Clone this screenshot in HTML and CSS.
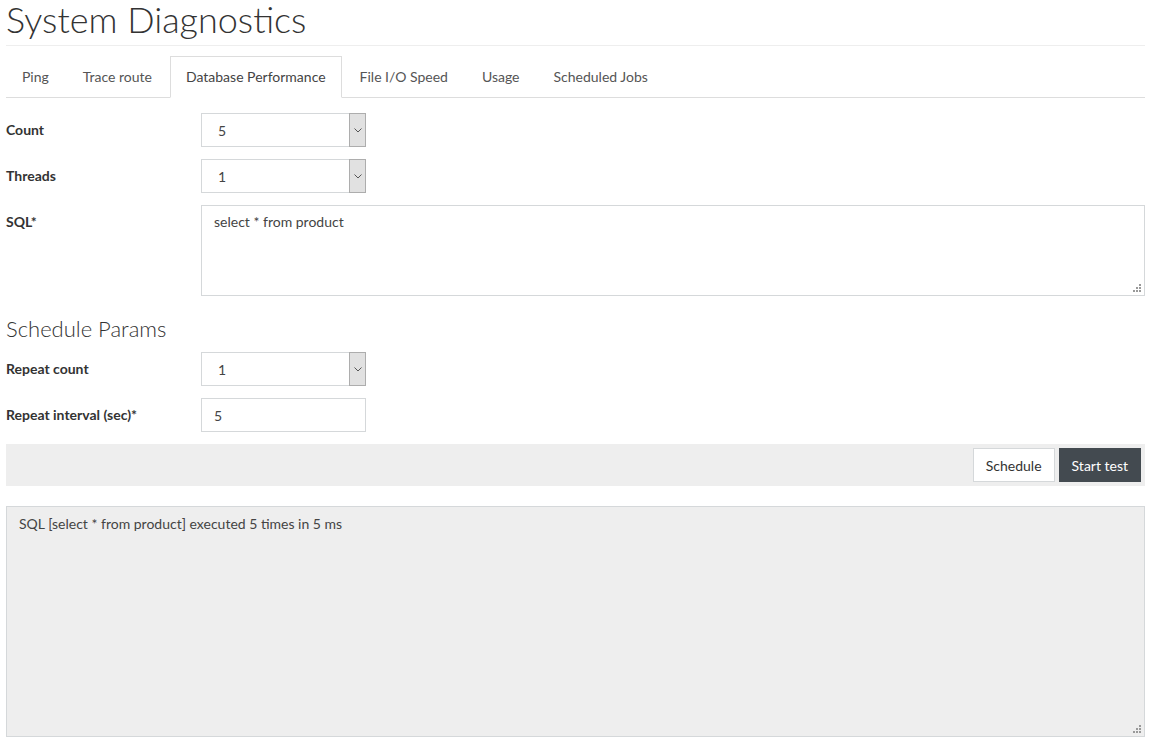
FILE: index.html
```html
<!DOCTYPE html>
<html lang="en">
<head>
  <meta charset="UTF-8">
  <meta name="viewport" content="width=device-width, initial-scale=1.0">
  <title>System Diagnostics</title>
  <link rel="stylesheet" href="styles.css">
</head>
<body>
  <h1 class="page-title">System Diagnostics</h1>

  <!-- Tabs -->
  <ul class="tabs">
    <li><a href="#">Ping</a></li>
    <li><a href="#">Trace route</a></li>
    <li class="active"><a href="#">Database Performance</a></li>
    <li><a href="#">File I/O Speed</a></li>
    <li><a href="#">Usage</a></li>
    <li><a href="#">Scheduled Jobs</a></li>
  </ul>

  <!-- Test params -->
  <form class="form">
    <div class="row">
      <label class="label">Count</label>
      <div class="select-wrap">
        <select class="control">
          <option>5</option>
        </select>
        <span class="select-arrow"><svg width="8" height="5" viewBox="0 0 8 5"><path d="M0.5 0.5 L4 4 L7.5 0.5" fill="none" stroke="#555" stroke-width="1"/></svg></span>
      </div>
    </div>
    <div class="row">
      <label class="label">Threads</label>
      <div class="select-wrap">
        <select class="control">
          <option>1</option>
        </select>
        <span class="select-arrow"><svg width="8" height="5" viewBox="0 0 8 5"><path d="M0.5 0.5 L4 4 L7.5 0.5" fill="none" stroke="#555" stroke-width="1"/></svg></span>
      </div>
    </div>
    <div class="row">
      <label class="label">SQL*</label>
      <div class="area-wrap">
        <textarea class="control sql">select * from product</textarea>
        <span class="grip"></span>
      </div>
    </div>

    <h3 class="subtitle">Schedule Params</h3>

    <div class="row">
      <label class="label">Repeat count</label>
      <div class="select-wrap">
        <select class="control">
          <option>1</option>
        </select>
        <span class="select-arrow"><svg width="8" height="5" viewBox="0 0 8 5"><path d="M0.5 0.5 L4 4 L7.5 0.5" fill="none" stroke="#555" stroke-width="1"/></svg></span>
      </div>
    </div>
    <div class="row">
      <label class="label">Repeat interval (sec)*</label>
      <input class="control short" type="text" value="5">
    </div>

    <div class="toolbar">
      <button type="button" class="btn">Schedule</button>
      <button type="button" class="btn btn-dark">Start test</button>
    </div>
  </form>

  <!-- Output -->
  <div class="area-wrap">
    <textarea class="result" readonly>SQL [select * from product] executed 5 times in 5 ms</textarea>
    <span class="grip"></span>
  </div>
</body>
</html>
```

FILE: styles.css
```css
body {
  font-family: Lato, "Open Sans", sans-serif;
  font-size: 14px;
  color: #333;
  margin: 0 6px;
}
.page-title {
  font-size: 36px;
  font-weight: 300;
  line-height: 1.2;
  margin: -2px 0 10px;
  padding-bottom: 4px;
  border-bottom: 1px solid #eee;
}
.tabs {
  list-style: none;
  margin: 0 0 15px;
  padding: 0;
  display: flex;
  border-bottom: 1px solid #ddd;
}
.tabs li {
  margin-bottom: -1px;
  margin-right: 2px;
}
.tabs a {
  display: block;
  padding: 10px 15px;
  font-size: 14px;
  line-height: 20px;
  color: #555;
  text-decoration: none;
  border: 1px solid transparent;
}
.tabs .active a {
  color: #444;
  background: #fff;
  border-color: #ddd #ddd transparent;
}
.row {
  display: flex;
  align-items: flex-start;
  margin-bottom: 12px;
}
.label {
  width: 195px;
  flex: none;
  font-weight: bold;
  line-height: 34px;
}
.control {
  font-family: inherit;
  font-size: 14px;
  color: #444;
  height: 34px;
  box-sizing: border-box;
  border: 1px solid #d5d8da;
  background: #fff;
  padding: 0 12px;
  border-radius: 0;
}
.select-wrap {
  position: relative;
  width: 165px;
}
.select-wrap select {
  width: 100%;
  appearance: none;
  -webkit-appearance: none;
  padding-left: 16px;
}
.select-arrow {
  position: absolute;
  top: 0;
  right: 0;
  width: 17px;
  height: 34px;
  box-sizing: border-box;
  background: #e1e1e1;
  border: 1px solid #adadad;
  display: flex;
  align-items: center;
  justify-content: center;
  pointer-events: none;
}
.short {
  width: 165px;
}
.area-wrap {
  position: relative;
  flex: 1;
}
.grip {
  position: absolute;
  right: 4px;
  bottom: 4px;
  width: 8px;
  height: 8px;
  pointer-events: none;
  background:
    linear-gradient(#999, #999) 6px 0 / 2px 2px no-repeat,
    linear-gradient(#999, #999) 3px 3px / 2px 2px no-repeat,
    linear-gradient(#999, #999) 6px 3px / 2px 2px no-repeat,
    linear-gradient(#999, #999) 0 6px / 2px 2px no-repeat,
    linear-gradient(#999, #999) 3px 6px / 2px 2px no-repeat,
    linear-gradient(#999, #999) 6px 6px / 2px 2px no-repeat;
}
.sql {
  display: block;
  width: 100%;
  height: 91px;
  padding: 7px 12px;
  resize: none;
}
.subtitle {
  font-size: 22px;
  font-weight: 300;
  line-height: 1.1;
  margin: 21px 0 11px;
}
.toolbar {
  display: flex;
  justify-content: flex-end;
  gap: 4px;
  padding: 4px;
  background: #eee;
  margin-bottom: 20px;
}
.btn {
  font-family: inherit;
  font-size: 14px;
  height: 34px;
  padding: 0 12px;
  border: 1px solid #d5d8da;
  background: #fff;
  color: #333;
  cursor: pointer;
}
.btn-dark {
  background: #434a50;
  border-color: #434a50;
  color: #fff;
}
.result {
  display: block;
  width: 100%;
  height: 231px;
  box-sizing: border-box;
  font-family: inherit;
  font-size: 14px;
  color: #444;
  background: #eee;
  border: 1px solid #d5d8da;
  padding: 8px 12px;
  margin: 0;
  resize: none;
}
```
